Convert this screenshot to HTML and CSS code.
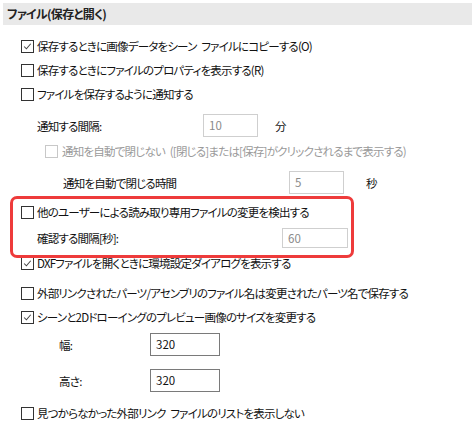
FILE: index.html
```html
<!doctype html>
<html lang="ja">
 <head>
  <meta charset="UTF-8">
  <meta name="viewport" content="width=device-width, initial-scale=1.0">
  <title>ファイル(保存と開く)</title>
  <link rel="stylesheet" href="styles.css">
 </head>
 <body>
  <div class="panel">
   <div class="section-title">ファイル(保存と開く)</div>

   <div class="options">
    <label class="row first"><span class="box checked"><svg viewBox="0 0 13 13"><path d="M2.5 6.5 L5.2 9.2 L10.3 3.3"/></svg></span>保存するときに画像データをシーン ファイルにコピーする(O)</label>
    <label class="row"><span class="box"></span>保存するときにファイルのプロパティを表示する(R)</label>
    <label class="row"><span class="box"></span>ファイルを保存するように通知する</label>

    <div class="field notify-interval">
     <span class="field-label w-166">通知する間隔:</span>
     <span class="input dim w-55">10</span>
     <span class="unit">分</span>
    </div>

    <label class="row sub disabled"><span class="box"></span>通知を自動で閉じない ([閉じる]または[保存]がクリックされるまで表示する)</label>

    <div class="field auto-close">
     <span class="field-label w-226">通知を自動で閉じる時間</span>
     <span class="input dim w-55">5</span>
     <span class="unit wide">秒</span>
    </div>

    <label class="row detect"><span class="box"></span>他のユーザーによる読み取り専用ファイルの変更を検出する</label>
    <div class="field check-interval">
     <span class="field-label w-245">確認する間隔[秒]:</span>
     <span class="input dim short w-66">60</span>
    </div>

    <label class="row dxf"><span class="box checked"><svg viewBox="0 0 13 13"><path d="M2.5 6.5 L5.2 9.2 L10.3 3.3"/></svg></span>DXFファイルを開くときに環境設定ダイアログを表示する</label>
    <label class="row external"><span class="box"></span>外部リンクされたパーツ/アセンブリのファイル名は変更されたパーツ名で保存する</label>
    <label class="row"><span class="box checked"><svg viewBox="0 0 13 13"><path d="M2.5 6.5 L5.2 9.2 L10.3 3.3"/></svg></span>シーンと2Dドローイングのプレビュー画像のサイズを変更する</label>

    <div class="field size-width">
     <span class="field-label size">幅:</span>
     <span class="input w-70">320</span>
    </div>
    <div class="field size-height">
     <span class="field-label size">高さ:</span>
     <span class="input w-70">320</span>
    </div>

    <label class="row last"><span class="box"></span>見つからなかった外部リンク ファイルのリストを表示しない</label>
   </div>

   <!-- annotation highlight -->
   <div class="highlight"></div>
  </div>
 </body>
</html>
```

FILE: styles.css
```css
body {
  margin: 0;
  background-color: #fff;
  color: #111;
  font-family: "Noto Sans CJK JP", "Noto Sans", sans-serif;
  font-size: 11.5px;
  letter-spacing: -0.8px;
  word-spacing: 3px;
  font-feature-settings: "palt";
}
.panel {
  position: relative;
  width: 472px;
  height: 432px;
  overflow: hidden;
}
.section-title {
  margin: 3px 0 0 3px;
  height: 22px;
  line-height: 22px;
  padding-left: 4px;
  background-color: #e9e9e9;
  color: #222;
  font-size: 12px;
  font-weight: bold;
  letter-spacing: -0.7px;
}
.options {
  padding-left: 21px;
}
.row {
  display: flex;
  align-items: center;
  height: 24px;
  white-space: pre;
}
.row.first {
  margin-top: 9px;
}
.box {
  flex: none;
  width: 13px;
  height: 13px;
  box-sizing: border-box;
  border: 1px solid #333;
  background-color: #fff;
  margin-right: 3px;
}
.box svg {
  display: block;
  width: 11px;
  height: 11px;
}
.box svg path {
  fill: none;
  stroke: #444;
  stroke-width: 1.2;
}
.row.sub {
  padding-left: 24px;
  margin-top: 2px;
}
.row.sub .box {
  margin-right: 4px;
}
.row.disabled {
  color: #9a9a9a;
}
.row.disabled .box {
  border-color: #c8c8c8;
}
.field {
  display: flex;
  align-items: center;
  height: 23px;
  padding-left: 16px;
  white-space: nowrap;
}
.field-label {
  flex: none;
}
.w-166 { width: 166px; }
.w-226 { width: 226px; }
.w-245 { width: 245px; }
.field-label.size {
  width: 91px;
  padding-left: 22px;
}
.input {
  flex: none;
  box-sizing: border-box;
  height: 23px;
  line-height: 21px;
  padding-left: 5px;
  border: 1px solid #7a7a7a;
  background-color: #fff;
  color: #111;
  letter-spacing: 0;
}
.input.dim {
  border-color: #cfcfcf;
  color: #8a8a8a;
}
.input.short {
  height: 20px;
  line-height: 18px;
}
.w-55 { width: 55px; }
.w-66 { width: 66px; }
.w-70 { width: 70px; }
.unit {
  margin-left: 17px;
}
.unit.wide {
  margin-left: 22px;
}
.notify-interval {
  margin-top: 8px;
}
.auto-close {
  margin-top: 8px;
  padding-left: 42px;
}
.row.detect {
  margin-top: 6px;
}
.check-interval {
  margin-top: 4px;
  height: 20px;
}
.row.dxf {
  margin-top: 3px;
}
.row.external {
  margin-top: 6px;
}
.size-width {
  margin-top: 4px;
}
.size-height {
  margin-top: 13px;
}
.row.last {
  margin-top: 9px;
}
.highlight {
  position: absolute;
  left: 10px;
  top: 196px;
  width: 344px;
  height: 62px;
  box-sizing: border-box;
  border: 3px solid #ee3b3b;
  border-radius: 7px;
}
```
